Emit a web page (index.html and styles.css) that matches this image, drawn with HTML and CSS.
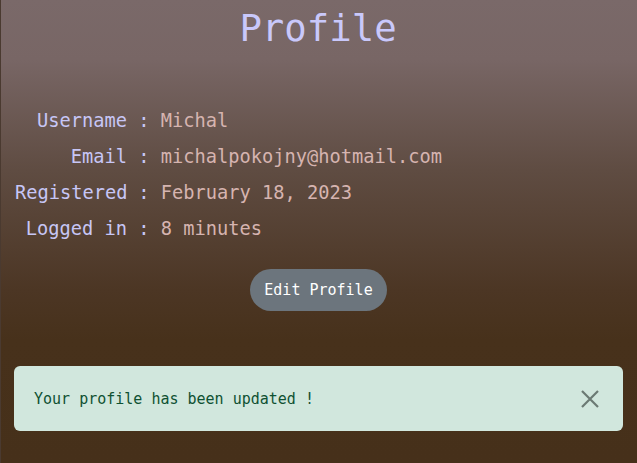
FILE: index.html
```html
<!DOCTYPE html>
<html>
<head>
<meta charset="utf-8">
<link rel="stylesheet" href="styles.css">
</head>
<body>
<main class="page">
  <h1 class="title">Profile</h1>
  <div class="info">
    <span class="label">Username</span><span class="sep">:</span><span class="value">Michal</span>
    <span class="label">Email</span><span class="sep">:</span><span class="value">michalpokojny@hotmail.com</span>
    <span class="label">Registered</span><span class="sep">:</span><span class="value">February 18, 2023</span>
    <span class="label">Logged in</span><span class="sep">:</span><span class="value">8 minutes</span>
  </div>
  <div class="actions">
    <button class="btn">Edit Profile</button>
  </div>
  <div class="alert">
    <span class="alert-text">Your profile has been updated !</span>
    <button class="close" aria-label="Close">
      <svg width="20" height="20" viewBox="0 0 20 20"><path d="M2 2 L18 18 M18 2 L2 18" stroke="currentColor" stroke-width="2.2" fill="none"/></svg>
    </button>
  </div>
</main>
</body>
</html>
```
FILE: styles.css
```css
html, body {
  margin: 0;
  padding: 0;
}
body {
  width: 637px;
  height: 463px;
  overflow: hidden;
  font-family: "DejaVu Sans Mono", monospace;
  background: linear-gradient(to bottom, #7a6969 0px, #786665 60px, #5f4c42 170px, #4c3624 290px, #47311b 340px, #46301a 463px);
  border-left: 1px solid #4a3a30;
  box-sizing: border-box;
}
.page {
  display: flex;
  flex-direction: column;
  padding: 0 13px 0 13px;
}
.title {
  margin: 6px 0 0 0;
  font-weight: normal;
  font-size: 37.3px;
  line-height: 44px;
  text-align: center;
  color: #c9c8fb;
  padding-right: 2px;
}
.info {
  margin-top: 53px;
  padding-left: 1px;
  display: grid;
  grid-template-columns: 112px auto 1fr;
  column-gap: 11.2px;
  font-size: 18.7px;
  line-height: 36px;
}
.label {
  text-align: right;
  color: #c7c6f6;
}
.sep {
  color: #c7c6f6;
}
.value {
  color: #d6b4b0;
}
.actions {
  display: flex;
  justify-content: center;
  margin-top: 22px;
  padding-right: 1px;
}
.btn {
  font-family: "DejaVu Sans Mono", monospace;
  font-size: 15px;
  color: #ffffff;
  background: #6c757d;
  border: none;
  border-radius: 21px;
  width: 137px;
  height: 42px;
  padding: 0;
}
.alert {
  margin-top: 55px;
  margin-right: 1px;
  height: 65px;
  box-sizing: border-box;
  background: #d1e7dd;
  border-radius: 6px;
  display: flex;
  align-items: center;
  justify-content: space-between;
  padding: 0 23px 0 20px;
}
.alert-text {
  font-size: 15px;
  color: #0f5132;
}
.close {
  background: none;
  border: none;
  padding: 0;
  width: 20px;
  height: 20px;
  color: #6b7a73;
  display: flex;
}
```
